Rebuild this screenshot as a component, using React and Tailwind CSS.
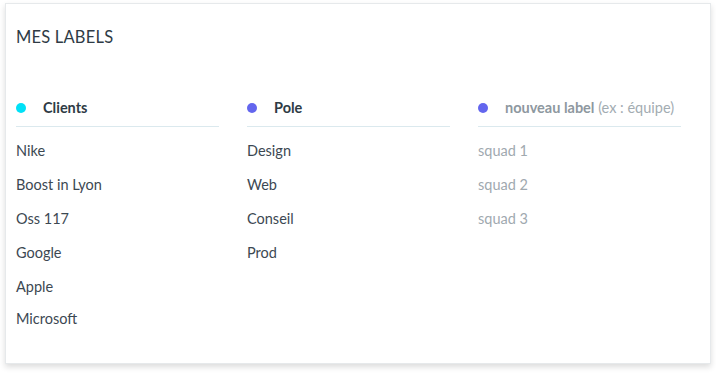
const columns = [
  {
    title: 'Clients',
    dot: 'bg-[#00e1f7]',
    items: ['Nike', 'Boost in Lyon', 'Oss 117', 'Google', 'Apple', 'Microsoft'],
  },
  {
    title: 'Pole',
    dot: 'bg-[#6366ee]',
    items: ['Design', 'Web', 'Conseil', 'Prod'],
  },
  {
    title: 'nouveau label',
    hint: '(ex : équipe)',
    dot: 'bg-[#6366ee]',
    placeholder: true,
    items: ['squad 1', 'squad 2', 'squad 3'],
  },
]

const LabelColumn = ({ col }) => {
  return (
    <div className="w-[203px] flex flex-col">
      <div className="flex items-center h-5 pb-2 box-content border-b border-[#dbe9ee]">
        <span className={`w-[10px] h-[10px] rounded-full ${col.dot}`}></span>
        {col.placeholder ? (
          <span className="ml-[17px] text-[14.5px] leading-5">
            <span className="font-bold text-[#8e989f]">{col.title}</span>{' '}
            <span className="text-[#a3acb2]">{col.hint}</span>
          </span>
        ) : (
          <span className="ml-[17px] text-[14.5px] leading-5 font-bold text-[#2e3b45]">
            {col.title}
          </span>
        )}
      </div>
      <div className="flex flex-col mt-[14px]">
        {col.items.map((item, i) => (
          <div
            key={item}
            className={`text-[14.5px] leading-5 ${
              col.placeholder ? 'text-[#a0a9af]' : 'text-[#3c4852]'
            } ${i === 0 ? '' : i === 5 ? 'mt-3' : 'mt-[14px]'}`}
          >
            {item}
          </div>
        ))}
      </div>
    </div>
  )
}

export default function App() {
  return (
    <div
      className="w-[716px] h-[376px] bg-white"
      style={{ fontFamily: 'Lato, "Open Sans", sans-serif' }}
    >
      <div className="ml-[5px] mt-[3px] w-[706px] h-[361px] bg-white border border-[#e6e9eb] shadow-[0_3px_6px_rgba(0,0,0,0.14)] pl-[10px] pt-[21px]">
        <h1 className="text-[16.5px] leading-6 text-[#2e3b45] tracking-[0.2px]">MES LABELS</h1>
        <div className="flex gap-[28px] mt-[49px]">
          {columns.map((col) => (
            <LabelColumn key={col.title} col={col} />
          ))}
        </div>
      </div>
    </div>
  )
}
